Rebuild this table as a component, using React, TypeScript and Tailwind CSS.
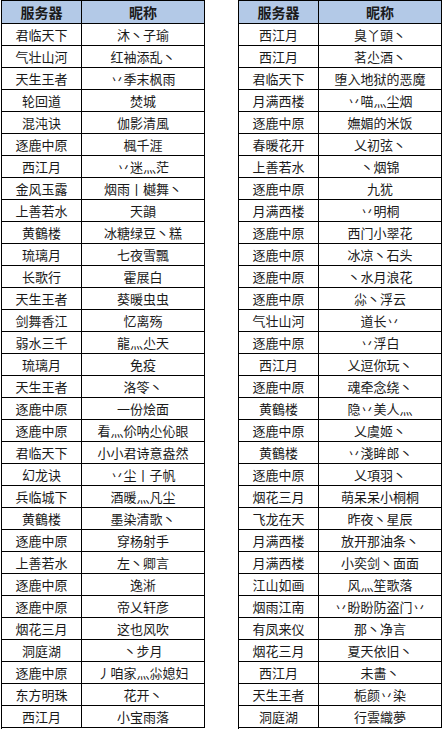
import React from "react";

type Row = [string, string];

const leftRows: Row[] = [
  ["君临天下", "沐丶子瑜"],
  ["气壮山河", "红袖添乱丶"],
  ["天生王者", "丷季末枫雨"],
  ["轮回道", "焚城"],
  ["混沌诀", "伽影清風"],
  ["逐鹿中原", "楓千涯"],
  ["西江月", "丷迷灬茫"],
  ["金风玉露", "烟雨丨樾舞丶"],
  ["上善若水", "天韻"],
  ["黄鶴楼", "冰糖绿豆丶糕"],
  ["琉璃月", "七夜雪飄"],
  ["长歌行", "霍展白"],
  ["天生王者", "葵暖虫虫"],
  ["剑舞香江", "忆离殇"],
  ["弱水三千", "龍灬尐天"],
  ["琉璃月", "免疫"],
  ["天生王者", "洛笭丶"],
  ["逐鹿中原", "一份烩面"],
  ["逐鹿中原", "看灬伱呐尐伈眼"],
  ["君临天下", "小小君诗意盎然"],
  ["幻龙诀", "丷尘丨子帆"],
  ["兵临城下", "酒暖灬凡尘"],
  ["黄鶴楼", "墨染清歌丶"],
  ["逐鹿中原", "穿杨射手"],
  ["上善若水", "左丶卿言"],
  ["逐鹿中原", "逸淅"],
  ["逐鹿中原", "帝乂轩彦"],
  ["烟花三月", "这也风吹"],
  ["洞庭湖", "丶步月"],
  ["逐鹿中原", "丿咱家灬尛媳妇"],
  ["东方明珠", "花开丶"],
  ["西江月", "小宝雨落"],
];

const rightRows: Row[] = [
  ["西江月", "臭丫頭丶"],
  ["西江月", "茗尐酒丶"],
  ["君临天下", "堕入地狱的恶魔"],
  ["月满西楼", "丷喵灬尘烟"],
  ["逐鹿中原", "嫵媚的米饭"],
  ["春暖花开", "乂初弦丶"],
  ["上善若水", "丶烟锦"],
  ["逐鹿中原", "九犹"],
  ["月满西楼", "丷明桐"],
  ["逐鹿中原", "西门小翠花"],
  ["逐鹿中原", "冰凉丶石头"],
  ["逐鹿中原", "丶水月浪花"],
  ["逐鹿中原", "尛丶浮云"],
  ["气壮山河", "道长丷"],
  ["逐鹿中原", "丷浮白"],
  ["西江月", "乂逗你玩丶"],
  ["逐鹿中原", "魂牵念绕丶"],
  ["黄鶴楼", "隐丷美人灬"],
  ["逐鹿中原", "乂虞姬丶"],
  ["黄鶴楼", "丷淺眸郎丶"],
  ["逐鹿中原", "乂項羽丶"],
  ["烟花三月", "萌呆呆小桐桐"],
  ["飞龙在天", "昨夜丶星辰"],
  ["月满西楼", "放开那油条丶"],
  ["月满西楼", "小奕剑丶面面"],
  ["江山如画", "风灬笙歌落"],
  ["烟雨江南", "丷盼盼防盗门丷"],
  ["有凤来仪", "那丶净言"],
  ["烟花三月", "夏天依旧丶"],
  ["西江月", "未畵丶"],
  ["天生王者", "栀颜丷染"],
  ["洞庭湖", "行雲織夢"],
];

function NameTable({ rows }: { rows: Row[] }) {
  return (
    <div className="w-[204px] border-l border-t border-black">
      {/* header */}
      <div className="flex h-[23px] bg-[#b3c9e7] border-b border-black font-bold text-[14px]">
        <div className="w-[80px] border-r border-black flex items-center justify-center">服务器</div>
        <div className="flex-1 border-r border-black flex items-center justify-center">昵称</div>
      </div>
      {rows.map(([server, nick], i) => (
        <div key={i} className="flex h-[22px] border-b border-black">
          <div className="w-[80px] border-r border-black flex items-center justify-center">{server}</div>
          <div className="flex-1 border-r border-black flex items-center justify-center">{nick}</div>
        </div>
      ))}
    </div>
  );
}

export default function App() {
  return (
    <div
      className="w-[442px] h-[729px] bg-white flex pl-[1px] gap-[33px] text-[13px] text-[#1a1a1a] leading-none"
      style={{ fontFamily: '"Noto Sans CJK SC", "Noto Sans", sans-serif' }}
    >
      <NameTable rows={leftRows} />
      <NameTable rows={rightRows} />
    </div>
  );
}
